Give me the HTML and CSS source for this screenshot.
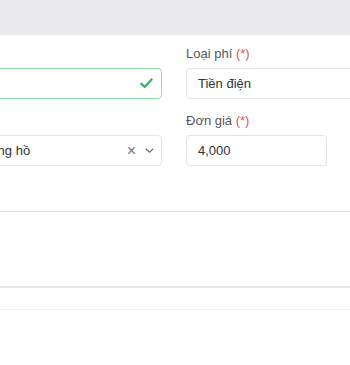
FILE: index.html
```html
<!DOCTYPE html>
<html lang="vi">

<head>
    <meta charset="UTF-8">
    <meta name="viewport" content="width=device-width, initial-scale=1.0">
    <title>Phí dịch vụ</title>
    <link rel="stylesheet" href="styles.css">
</head>

<body>
    <div class="topbar"></div>
    <div class="form">
        <div class="row row-2">
            <div class="field">
                <label class="lbl">&nbsp;</label>
                <div class="input is-valid">
                    <span class="val"></span>
                    <svg class="check" width="13" height="11" viewBox="0 0 13 11">
                        <polyline points="1.4,5.8 4.7,9 11.6,1.4" fill="none" stroke="#2eb85c" stroke-width="2.3"
                            stroke-linecap="round" stroke-linejoin="round" />
                    </svg>
                </div>
            </div>
            <div class="field">
                <label class="lbl">Loại phí <span class="req">(*)</span></label>
                <div class="input"><span class="val">Tiền điện</span></div>
            </div>
        </div>
        <div class="row row-3">
            <div class="field">
                <label class="lbl">&nbsp;</label>
                <div class="input select">
                    <span class="val">Đồng hồ</span>
                    <span class="clear">&times;</span>
                    <svg class="caret" width="9" height="5" viewBox="0 0 9 5">
                        <polyline points="0.8,0.8 4.5,4.2 8.2,0.8" fill="none" stroke="#6b6b73" stroke-width="1.2" />
                    </svg>
                </div>
            </div>
            <div class="field">
                <label class="lbl">Đơn giá <span class="req">(*)</span></label>
                <div class="input"><span class="val">4,000</span></div>
            </div>
            <div class="field">
                <label class="lbl">&nbsp;</label>
                <div class="input"></div>
            </div>
        </div>
    </div>
    <div class="section"></div>
    <div class="footer"></div>
</body>

</html>
```
FILE: styles.css
```css
body {
    margin: 0;
    width: 350px;
    height: 365px;
    overflow: hidden;
    background: #ffffff;
    font-family: "Liberation Sans", Arial, sans-serif;
    color: #333338;
}

.topbar {
    height: 35px;
    background: #e9e9eb;
}

.form {
    margin-left: -31px;
    padding-top: 11px;
    padding-bottom: 45px;
    border-bottom: 1px solid #dcdce4;
}

.row {
    display: grid;
    column-gap: 24px;
}

.row-2 {
    grid-template-columns: 193px 194px;
    margin-bottom: 14px;
}

.row-3 {
    grid-template-columns: 193px 141px 141px;
}

.lbl {
    display: block;
    font-size: 13px;
    line-height: 16px;
    color: #55555c;
    margin-bottom: 6px;
}

.req {
    color: #e55353;
}

.input {
    display: flex;
    align-items: center;
    height: 31px;
    box-sizing: border-box;
    padding: 0 11px;
    border: 1px solid #e2e2e8;
    border-radius: 4px;
    font-size: 13px;
    color: #333338;
}

.val {
    flex: 1;
}

.is-valid {
    border-color: #8fdcab;
}

.check {
    margin-right: -3px;
}

.clear {
    font-size: 16px;
    color: #77777e;
    margin-right: 9px;
}

.caret {
    margin-right: -4px;
}

.section {
    height: 74px;
    border-bottom: 2px solid #e6e6ea;
}

.footer {
    height: 21px;
    border-bottom: 1px solid #f2f2f4;
}
```
